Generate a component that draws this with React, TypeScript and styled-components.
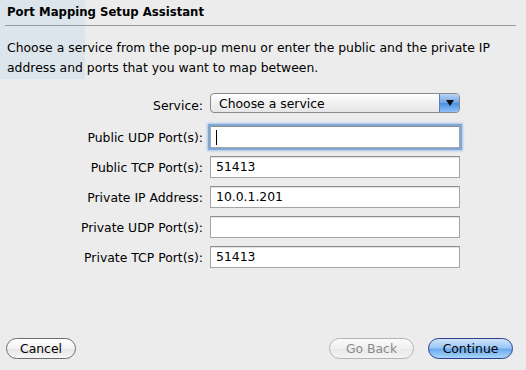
import React from 'react';
import styled, { createGlobalStyle } from 'styled-components';

const GlobalStyle = createGlobalStyle`
  html, body {
    margin: 0;
    padding: 0;
    background: #ececec;
  }
  body {
    font-family: "DejaVu Sans", "Liberation Sans", sans-serif;
    color: #000;
  }
`;

const fields = [
  { label: 'Public UDP Port(s):', value: '', focused: true },
  { label: 'Public TCP Port(s):', value: '51413' },
  { label: 'Private IP Address:', value: '10.0.1.201' },
  { label: 'Private UDP Port(s):', value: '' },
  { label: 'Private TCP Port(s):', value: '51413' },
];

const App: React.FC = () => {
  return (
    <>
      <GlobalStyle />
      <Sheet>
        <GhostSidebar />
        <Title>Port Mapping Setup Assistant</Title>
        <Rule />
        <Intro>
          Choose a service from the pop-up menu or enter the public and the private IP
          address and ports that you want to map between.
        </Intro>
        <Form>
          <Label>Service:</Label>
          <Popup>
            <PopupText>Choose a service</PopupText>
            <PopupArrow>
              <svg width="8" height="6" viewBox="0 0 8 6">
                <path d="M0 0 L8 0 L4 6 Z" fill="#111" />
              </svg>
            </PopupArrow>
          </Popup>
          {fields.map((f) => (
            <React.Fragment key={f.label}>
              <Label>{f.label}</Label>
              <Field $focused={!!f.focused}>
                {f.value}
                {f.focused && <Caret />}
              </Field>
            </React.Fragment>
          ))}
        </Form>
        <Footer>
          <Button>Cancel</Button>
          <Spacer />
          <Button $disabled>Go Back</Button>
          <Button $primary>Continue</Button>
        </Footer>
      </Sheet>
    </>
  );
};

const Sheet = styled.div`
  position: relative;
  width: 526px;
  height: 370px;
  box-sizing: border-box;
  display: flex;
  flex-direction: column;
  overflow: hidden;
`;

const GhostSidebar = styled.div`
  position: absolute;
  left: 0;
  top: 0;
  width: 85px;
  height: 79px;
  background: #dce5ec;
  z-index: 0;
`;

const Title = styled.div`
  position: relative;
  font-size: 11.7px;
  font-weight: bold;
  padding: 4px 0 0 7px;
  height: 18px;
  line-height: 16px;
`;

const Rule = styled.div`
  position: relative;
  margin: 3px 10px 0 5px;
  height: 1px;
  background: #9a9a9a;
`;

const Intro = styled.p`
  position: relative;
  margin: 12px 0 0 7px;
  font-size: 12.4px;
  line-height: 20px;
  width: 510px;
`;

const Form = styled.div`
  display: grid;
  grid-template-columns: 203px 250px;
  column-gap: 7px;
  row-gap: 8px;
  margin-top: 15px;
  align-items: center;
`;

const Label = styled.div`
  text-align: right;
  font-size: 12.4px;
  white-space: nowrap;
`;

const Popup = styled.div`
  height: 20px;
  box-sizing: border-box;
  border: 1px solid #8a8a8a;
  border-radius: 4px;
  background: linear-gradient(#ffffff, #f1f1f1 50%, #e6e6e6);
  display: flex;
  align-items: center;
  overflow: hidden;
  margin-bottom: 5px;
`;

const PopupText = styled.div`
  flex: 1;
  font-size: 12.4px;
  padding-left: 8px;
`;

const PopupArrow = styled.div`
  width: 19px;
  height: 100%;
  display: flex;
  align-items: center;
  justify-content: center;
  background: linear-gradient(#b8d4f4, #6fa3e6 50%, #4a8ee0 51%, #8fc0f6);
  border-left: 1px solid #5a7fb8;
`;

const Field = styled.div<{ $focused: boolean }>`
  position: relative;
  height: 22px;
  box-sizing: border-box;
  background: #fff;
  border: 1px solid #a5a5a5;
  border-top-color: #8e8e8e;
  font-size: 12.4px;
  line-height: 20px;
  padding-left: 5px;
  box-shadow: ${(p) => (p.$focused ? '0 0 0 2px #7ea7d8, 0 0 2px 3px #a9c6ea' : 'inset 0 1px 0 #e4e4e4')};
`;

const Caret = styled.span`
  position: absolute;
  left: 5px;
  top: 3px;
  width: 1px;
  height: 15px;
  background: #000;
`;

const Footer = styled.div`
  display: flex;
  align-items: center;
  gap: 14px;
  margin-top: auto;
  padding: 0 13px 11px 6px;
`;

const Spacer = styled.div`
  flex: 1;
`;

const Button = styled.div<{ $primary?: boolean; $disabled?: boolean }>`
  height: 21px;
  box-sizing: border-box;
  padding: 0 14px;
  border-radius: 11px;
  font-size: 12.4px;
  display: flex;
  align-items: center;
  justify-content: center;
  border: 1px solid ${(p) => (p.$primary ? '#2b3f8a' : p.$disabled ? '#b4b4b4' : '#6e6e6e')};
  color: ${(p) => (p.$disabled ? '#8a8a8a' : '#000')};
  background: ${(p) =>
    p.$primary
      ? 'linear-gradient(#cfe4fb, #9cc8f5 45%, #6eaaee 55%, #a8d6fb)'
      : p.$disabled
      ? 'linear-gradient(#fbfbfb, #f0f0f0 50%, #e8e8e8 51%, #f4f4f4)'
      : 'linear-gradient(#ffffff, #f3f3f3 50%, #e6e6e6 51%, #f6f6f6)'};
  width: ${(p) => (p.$primary || p.$disabled ? '85px' : '70px')};
`;

export default App;
